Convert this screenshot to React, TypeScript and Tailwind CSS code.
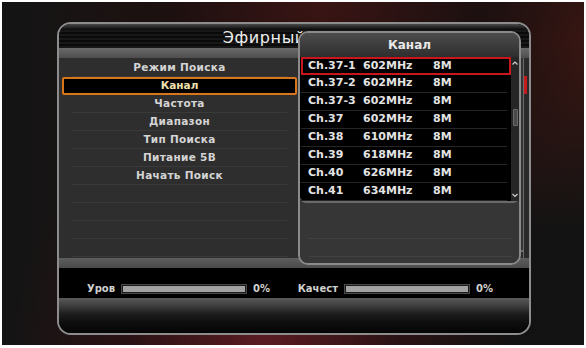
import React from "react";

const menu = [
  "Режим Поиска",
  "Канал",
  "Частота",
  "Диапазон",
  "Тип Поиска",
  "Питание 5В",
  "Начать Поиск",
  "",
  "",
  "",
  "",
];

const channels = [
  ["Ch.37-1", "602MHz", "8M"],
  ["Ch.37-2", "602MHz", "8M"],
  ["Ch.37-3", "602MHz", "8M"],
  ["Ch.37", "602MHz", "8M"],
  ["Ch.38", "610MHz", "8M"],
  ["Ch.39", "618MHz", "8M"],
  ["Ch.40", "626MHz", "8M"],
  ["Ch.41", "634MHz", "8M"],
];

function SignalBar({ label, labelWidth }: { label: string; labelWidth: string }) {
  return (
    <div className="flex items-center">
      <span className={`${labelWidth} text-right pr-[6px] text-[10px] font-bold text-[#d0d0d0]`}>{label}</span>
      <div className="w-[126px] h-[10px] border border-[#4a4a4a] bg-[#1a1a1a] p-[1px]">
        <div className="w-full h-full bg-[#a3a3a3]" />
      </div>
      <span className="ml-[6px] text-[10px] font-bold text-[#d0d0d0]">0%</span>
    </div>
  );
}

function App() {
  return (
    <div
      className="w-[586px] h-[348px] bg-white pt-[2px] pl-[2px] pr-[2px] pb-[3px]"
      style={{ fontFamily: '"DejaVu Sans", "Liberation Sans", sans-serif' }}
    >
      <div className="w-full h-full pl-[55px] pt-[20px] bg-[radial-gradient(ellipse_at_55%_0%,#3a1414_0%,#1c1010_35%,transparent_60%),radial-gradient(ellipse_at_45%_100%,#5a1c22_0%,#2a1214_30%,transparent_55%),radial-gradient(ellipse_at_100%_10%,#3a1612_0%,transparent_45%),linear-gradient(90deg,#141414,#1a1414_20%,#141212_80%,#131313)]">
        <div className="relative w-[474px] h-[313px] rounded-[14px] border-2 border-[#8d8d8d] bg-black">
          <div className="w-full h-full rounded-[12px] overflow-hidden flex flex-col">
            {/* header */}
            <div className="h-[24px] flex items-center justify-center pt-[3px] bg-[linear-gradient(180deg,#4a4a4a_0px,#1c1c1c_4px,transparent_6px),repeating-linear-gradient(180deg,#0a0a0a_0px,#0a0a0a_2px,#262626_3px,#0a0a0a_4px)]">
              <span className="text-[16px] text-[#eeeeee] tracking-[0.6px]">Эфирный Поиск</span>
            </div>
            <div className="h-[10px] bg-[linear-gradient(180deg,#6a6a6a,#4e4e4e)]" />
            {/* body */}
            <div className="h-[200px] flex bg-[#2e2e2e]">
              <div className="w-[238px] pl-[3px] pt-[1px] flex flex-col">
                {menu.map((m, i) =>
                  i === 1 ? (
                    <div
                      key={i}
                      className="h-[18px] flex items-center justify-center bg-black border-2 border-[#d9761c] rounded-[2px] text-[10.5px] font-bold text-[#f0e0b0]"
                    >
                      {m}
                    </div>
                  ) : (
                    <div
                      key={i}
                      className="h-[18px] mx-[10px] flex items-center justify-center border-b border-[#3a3a3a] text-[10.5px] font-bold text-[#d4d4d4] tracking-[0.3px]"
                    >
                      {m}
                    </div>
                  )
                )}
              </div>
              <div className="flex-1 flex pl-[1px]">
                <div className="flex-1 mb-[6px] border-l-2 border-b-2 border-[#6e6e6e] rounded-bl-[10px] bg-[#333333]" />
                <div className="w-[6px] flex flex-col pt-[18px] border-l border-[#6a6a6a] bg-[#2a2a2a]">
                  <div className="h-[18px] w-[3px] bg-[#c41b1b]" />
                </div>
              </div>
            </div>
            <div className="h-[10px] bg-[linear-gradient(180deg,#5e5e5e,#4a4a4a)]" />
            {/* status */}
            <div className="h-[30px] flex items-end pb-[2px] bg-black">
              <SignalBar label="Уров" labelWidth="w-[62px]" />
              <div className="w-[26px]" />
              <SignalBar label="Качест" labelWidth="w-[48px]" />
            </div>
            {/* bottom */}
            <div className="flex-1 bg-[linear-gradient(180deg,#5a5a5a_0%,#3a3a3a_25%,#1e1e1e_45%,#0e0e0e_70%,#050505_100%)]" />
          </div>

          {/* popup */}
          <div className="absolute left-[239px] top-[7px] w-[223px] h-[234px] rounded-[10px] border-2 border-[#8a8a8a] bg-[#383838] overflow-hidden flex flex-col">
            <div className="h-[24px] flex items-center justify-center bg-[linear-gradient(180deg,#4c4c4c,#2e2e2e)]">
              <span className="text-[12px] font-bold text-[#e8e8e8]">Канал</span>
            </div>
            <div className="h-[146px] flex bg-black rounded-b-[6px] border-b-2 border-[#6a6a6a]">
              <div className="w-[211px] ml-[1px] flex flex-col">
                {channels.map((c, i) => (
                  <div
                    key={i}
                    className={
                      i === 0
                        ? "h-[18px] flex items-center pl-[5px] bg-black border-2 border-[#c8161c] text-[11px] font-bold text-[#e4e4e4]"
                        : "h-[18px] flex items-center pl-[7px] mr-[4px] border-b border-[#262626] text-[11px] font-bold text-[#e4e4e4]"
                    }
                  >
                    <span className="w-[55px]">{c[0]}</span>
                    <span className="w-[70px]">{c[1]}</span>
                    <span>{c[2]}</span>
                  </div>
                ))}
              </div>
              <div className="w-[8px] flex flex-col items-center bg-[#262626]">
                <svg width="8" height="8" viewBox="0 0 8 8" className="mt-[2px]">
                  <path d="M1.5 5.5 L4 3 L6.5 5.5" stroke="#cfcfcf" strokeWidth="1.2" fill="none" />
                </svg>
                <div className="mt-[42px] w-[5px] h-[17px] rounded-[1px] bg-[#4a4a4a] border border-[#6a6a6a]" />
                <div className="flex-1" />
                <svg width="8" height="8" viewBox="0 0 8 8" className="mb-[2px]">
                  <path d="M1.5 3 L4 5.5 L6.5 3" stroke="#cfcfcf" strokeWidth="1.2" fill="none" />
                </svg>
              </div>
            </div>
            <div className="flex-1 flex flex-col px-[8px] pt-[18px] bg-[#363636]">
              <div className="h-[18px] border-b border-[#424242]" />
              <div className="h-[18px] border-b border-[#424242]" />
            </div>
          </div>
        </div>
      </div>
    </div>
  );
}

export default App;
